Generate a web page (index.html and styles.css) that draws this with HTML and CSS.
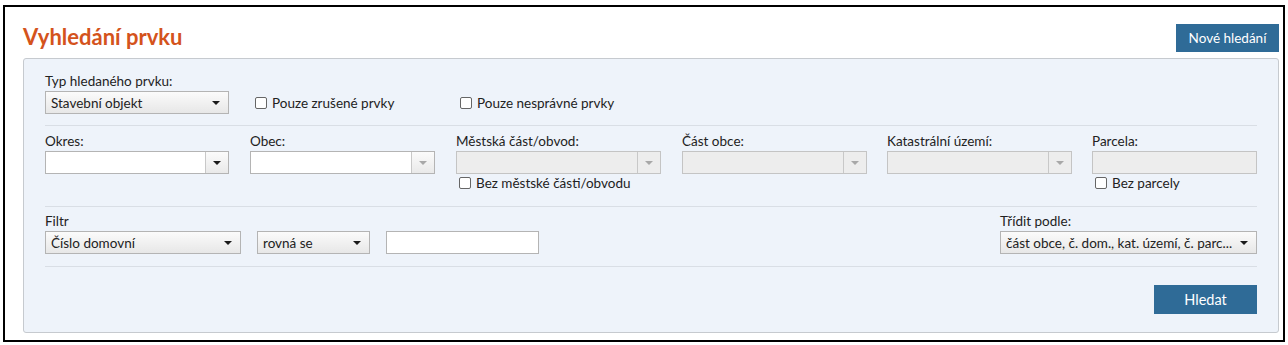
FILE: index.html
```html
<!DOCTYPE html>
<html lang="cs">
<head>
    <meta charset="UTF-8">
    <meta name="viewport" content="width=device-width, initial-scale=1.0">
    <title>Vyhledání prvku</title>
    <link rel="stylesheet" href="styles.css">
</head>
<body>
    <div class="page">
        <header class="page-header">
            <h1 class="page-title">Vyhledání prvku</h1>
            <button class="btn btn-new" type="button">Nové hledání</button>
        </header>

        <form class="search-panel">
            <div class="panel-row row-type">
                <div class="field">
                    <label class="field-label">Typ hledaného prvku:</label>
                    <div class="select w-type"><span class="select-text">Stavební objekt</span><span class="caret"></span></div>
                </div>
                <label class="check check-zrusene"><input type="checkbox"><span>Pouze zrušené prvky</span></label>
                <label class="check"><input type="checkbox"><span>Pouze nesprávné prvky</span></label>
            </div>

            <div class="panel-row row-place">
                <div class="field w-okres">
                    <label class="field-label">Okres:</label>
                    <div class="combo"><span class="combo-input"></span><span class="combo-btn"><span class="caret"></span></span></div>
                </div>
                <div class="field w-obec">
                    <label class="field-label">Obec:</label>
                    <div class="combo"><span class="combo-input"></span><span class="combo-btn"><span class="caret caret-muted"></span></span></div>
                </div>
                <div class="field w-mestska">
                    <label class="field-label">Městská část/obvod:</label>
                    <div class="combo is-disabled"><span class="combo-input"></span><span class="combo-btn"><span class="caret caret-muted"></span></span></div>
                    <label class="check check-below"><input type="checkbox"><span>Bez městské části/obvodu</span></label>
                </div>
                <div class="field w-cast">
                    <label class="field-label">Část obce:</label>
                    <div class="combo is-disabled"><span class="combo-input"></span><span class="combo-btn"><span class="caret caret-muted"></span></span></div>
                </div>
                <div class="field w-katastr">
                    <label class="field-label">Katastrální území:</label>
                    <div class="combo is-disabled"><span class="combo-input"></span><span class="combo-btn"><span class="caret caret-muted"></span></span></div>
                </div>
                <div class="field w-parcela">
                    <label class="field-label">Parcela:</label>
                    <input class="text-input is-disabled" type="text" disabled>
                    <label class="check check-below"><input type="checkbox"><span>Bez parcely</span></label>
                </div>
            </div>

            <div class="panel-row row-filter">
                <div class="field">
                    <label class="field-label">Filtr</label>
                    <div class="filter-controls">
                        <div class="select w-filtr"><span class="select-text">Číslo domovní</span><span class="caret"></span></div>
                        <div class="select w-oper"><span class="select-text">rovná se</span><span class="caret"></span></div>
                        <input class="text-input w-value" type="text">
                    </div>
                </div>
                <div class="field">
                    <label class="field-label">Třídit podle:</label>
                    <div class="select w-sort"><span class="select-text">část obce, č. dom., kat. území, č. parc...</span><span class="caret"></span></div>
                </div>
            </div>

            <div class="panel-actions">
                <button class="btn btn-search" type="button">Hledat</button>
            </div>
        </form>
    </div>
</body>
</html>
```

FILE: styles.css
```css
:root {
    --title-orange: #d4531c;
    --btn-blue: #2f6b97;
    --panel-bg: #eef3fa;
    --panel-border: #c6cacf;
    --divider: #d9dee5;
    --control-border: #b4b4b4;
    --text: #222;
}

* {
    margin: 0;
    padding: 0;
    box-sizing: border-box;
}

body {
    font-family: Lato, "Open Sans", sans-serif;
    font-size: 13.5px;
    color: var(--text);
    background: #fff;
}

.page {
    margin: 5px 3px 0;
    height: 337px;
    border: 2px solid #000;
    padding: 17px 4px 0 18px;
}

.page-header {
    display: flex;
    justify-content: space-between;
    align-items: flex-start;
    height: 34px;
}

.page-title {
    color: var(--title-orange);
    font-size: 22px;
    line-height: 22px;
    font-weight: 700;
    margin-top: 2px;
}

.btn {
    background: var(--btn-blue);
    color: #fff;
    border: none;
    font-family: inherit;
    cursor: pointer;
}

.btn-new {
    width: 103px;
    height: 28px;
    font-size: 13.5px;
}

.search-panel {
    background: var(--panel-bg);
    border: 1px solid var(--panel-border);
    border-radius: 3px;
    height: 275px;
    padding: 0 21px;
}

.panel-row {
    display: flex;
    border-bottom: 1px solid var(--divider);
}

.row-type {
    align-items: flex-end;
    padding: 14px 0 11px;
}

.row-place {
    gap: 20px;
    padding: 7px 0 14px;
}

.row-filter {
    justify-content: space-between;
    padding: 6px 0 12px;
}

.field-label {
    display: block;
    line-height: 16px;
    margin-bottom: 2px;
}

/* select-like dropdown */
.select {
    display: flex;
    align-items: center;
    justify-content: space-between;
    height: 23px;
    padding: 0 8px 0 5px;
    border: 1px solid var(--control-border);
    background: linear-gradient(#fbfbfb, #e7e7e7);
    white-space: nowrap;
}

.caret {
    width: 0;
    height: 0;
    border-left: 4px solid transparent;
    border-right: 4px solid transparent;
    border-top: 4px solid #1a1a1a;
    flex-shrink: 0;
}

.caret-muted {
    border-top-color: #a8a8a8;
}

.w-type { width: 184px; }
.w-filtr { width: 196px; }
.w-oper { width: 113px; }
.w-sort { width: 257px; }

/* combo box with separate button */
.combo {
    display: flex;
    height: 23px;
    border: 1px solid var(--control-border);
    background: #fff;
}

.combo-input {
    flex: 1;
}

.combo-btn {
    width: 23px;
    display: flex;
    align-items: center;
    justify-content: center;
    border-left: 1px solid #c8c8c8;
    background: linear-gradient(#fbfbfb, #e9e9e9);
}

.combo.is-disabled {
    background: #ededed;
    border-color: #c4c4c4;
}

.combo.is-disabled .combo-btn {
    background: #ededed;
}

.w-okres { width: 184px; }
.w-obec { width: 185px; margin-left: 1px; }
.w-mestska { width: 205px; margin-left: 1px; }
.w-cast { width: 185px; margin-left: 1px; }
.w-katastr { width: 185px; }
.w-parcela { width: 165px; }

.text-input {
    display: block;
    width: 100%;
    height: 23px;
    border: 1px solid var(--control-border);
    background: #fff;
    font-family: inherit;
}

.text-input.is-disabled {
    background: #ededed;
    border-color: #c4c4c4;
}

.filter-controls {
    display: flex;
    gap: 16px;
}

.w-value {
    width: 153px;
}

/* checkboxes */
.check {
    display: flex;
    align-items: center;
    gap: 5px;
    height: 23px;
    white-space: nowrap;
}

.check input {
    appearance: none;
    width: 12px;
    height: 12px;
    border: 1px solid #666;
    border-radius: 2px;
    background: #fff;
}

.check-zrusene {
    margin-left: 26px;
    width: 205px;
}

.check-below {
    height: 18px;
    margin-left: 3px;
}

.panel-actions {
    display: flex;
    justify-content: flex-end;
    padding-top: 18px;
}

.btn-search {
    width: 103px;
    height: 29px;
    font-size: 14.5px;
}
```
